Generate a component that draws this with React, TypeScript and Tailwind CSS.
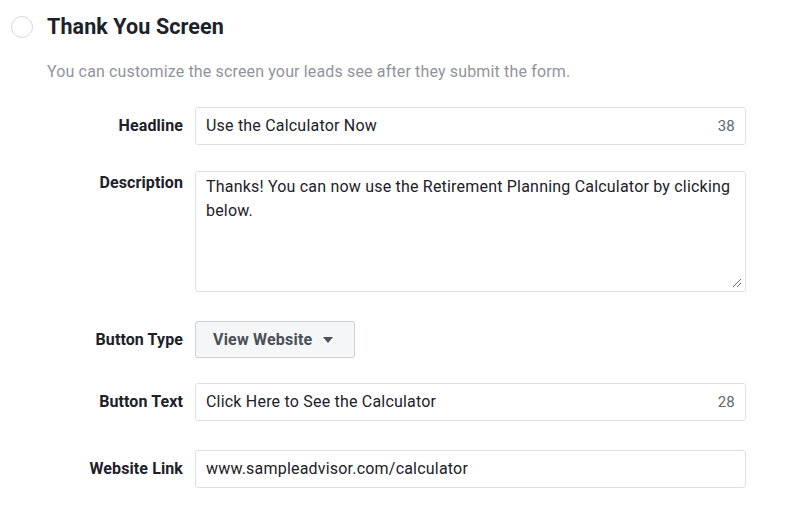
import React from 'react';

const font = { fontFamily: 'Roboto, "Liberation Sans", Arial, sans-serif' };

const Label: React.FC<{ children: React.ReactNode; top?: boolean }> = ({ children, top }) => (
  <div className={`w-[136px] shrink-0 text-right text-[16px] font-bold tracking-[0.1px] text-[#1d2129] ${top ? 'pt-[0px]' : 'self-center'}`}>
    {children}
  </div>
);

const TextBox: React.FC<{ value: string; count?: number }> = ({ value, count }) => (
  <div className="w-[551px] h-[38px] flex items-center justify-between border border-[#dddfe2] rounded-[3px] bg-white pl-[10px] pr-[10px] text-[16px] tracking-[0.2px] text-[#1d2129]">
    <span>{value}</span>
    {count !== undefined && <span className="text-[15px] text-[#606770]">{count}</span>}
  </div>
);

export default function App() {
  return (
    <div className="w-[800px] h-[518px] bg-white overflow-hidden" style={font}>
      <div className="flex items-center pt-[14px] pl-[11px]">
        <div className="w-[22px] h-[22px] rounded-full border-[1.5px] border-[#d5d8dc] bg-white" />
        <h1 className="ml-[14px] text-[21.5px] leading-[26px] font-bold text-[#1d2129] tracking-[0.1px]">Thank You Screen</h1>
      </div>

      <p className="mt-[20px] ml-[47px] text-[16px] tracking-[0.15px] text-[#90949c]">
        You can customize the screen your leads see after they submit the form.
      </p>

      <div className="ml-[47px] mt-[23px] flex flex-col">
        <div className="flex gap-3">
          <Label>Headline</Label>
          <TextBox value="Use the Calculator Now" count={38} />
        </div>

        <div className="flex gap-3 mt-[26px]">
          <Label top>Description</Label>
          <div className="relative w-[551px] h-[121px] border border-[#dddfe2] rounded-[3px] bg-white pl-[10px] pr-[10px] pt-[3px] text-[16px] tracking-[0.2px] leading-[24px] text-[#1d2129]">
            Thanks! You can now use the Retirement Planning Calculator by clicking below.
            <svg className="absolute right-[3px] bottom-[3px]" width="10" height="10" viewBox="0 0 10 10">
              <path d="M1 9 L9 1 M5 9 L9 5" stroke="#6b6e73" strokeWidth="1" fill="none" />
            </svg>
          </div>
        </div>

        <div className="flex gap-3 mt-[29px]">
          <Label>Button Type</Label>
          <button className="h-[37px] w-[160px] flex items-center gap-[11px] pl-[17px] border border-[#ccd0d5] rounded-[3px] bg-[#f5f6f7] text-[16px] tracking-[0.2px] font-bold text-[#4b4f56]">
            View Website
            <svg width="10" height="6" viewBox="0 0 10 6">
              <path d="M0 0 H10 L5 6 Z" fill="#4b4f56" />
            </svg>
          </button>
        </div>

        <div className="flex gap-3 mt-[25px]">
          <Label>Button Text</Label>
          <TextBox value="Click Here to See the Calculator" count={28} />
        </div>

        <div className="flex gap-3 mt-[29px]">
          <Label>Website Link</Label>
          <TextBox value="www.sampleadvisor.com/calculator" />
        </div>
      </div>
    </div>
  );
}
